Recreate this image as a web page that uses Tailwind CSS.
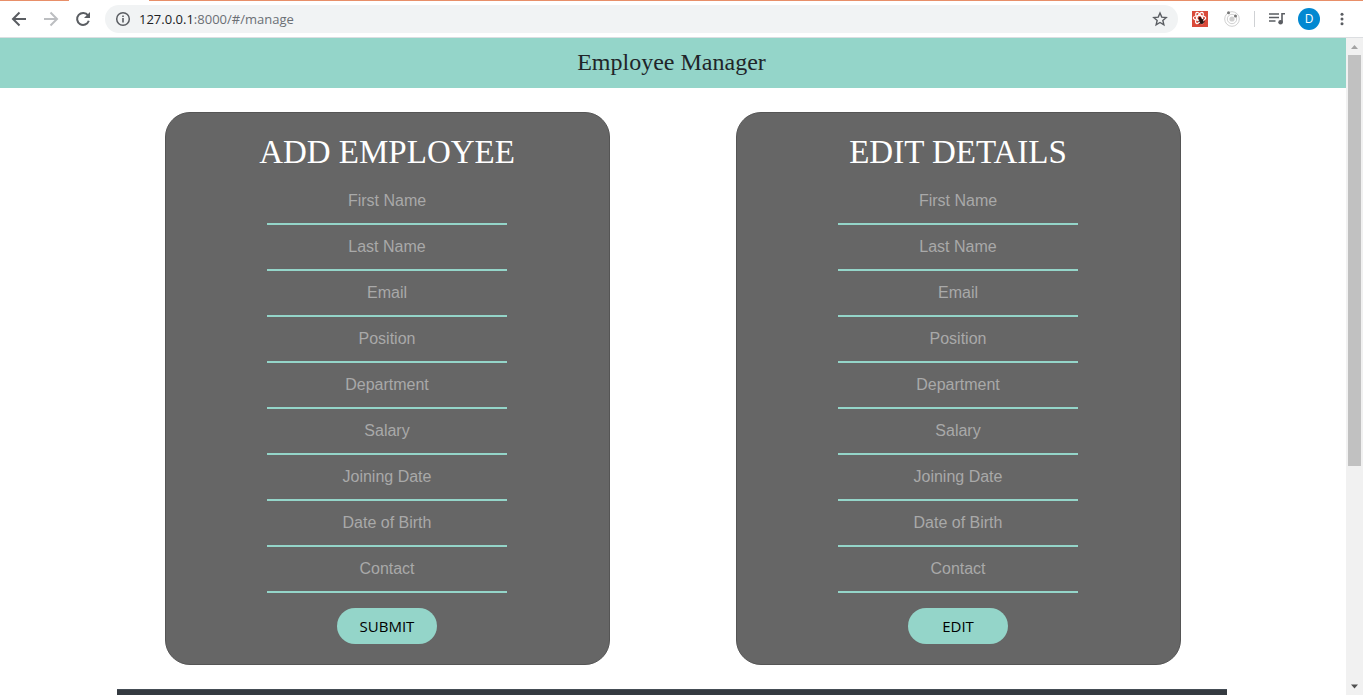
<!DOCTYPE html>
<html lang="en">
<head>
<meta charset="utf-8">
<meta name="viewport" content="width=device-width, initial-scale=1">
<title>Employee Manager</title>
<script src="https://cdn.jsdelivr.net/npm/@tailwindcss/browser@4"></script>
</head>
<body class="flex h-screen flex-col overflow-hidden bg-white font-['Open_Sans',sans-serif]">

<!-- Browser toolbar -->
<div class="flex h-px shrink-0 bg-[#e88f69]"><span class="ml-[69px] h-px w-20 bg-white"></span></div>
<nav aria-label="Browser" class="flex h-[37px] shrink-0 items-center border-b border-[#dcdee1] pl-[11px] pr-[13px] text-[#5f6368]">
  <div class="flex items-center gap-4">
    <button type="button" aria-label="Back" class="size-4"><svg viewBox="0 0 16 16" class="size-4" fill="none" stroke="#5a5d62" stroke-width="2"><path d="M15 8H2.5M8.500 1.500 2 8l6.500 6.500"/></svg></button>
    <button type="button" aria-label="Forward" class="size-4"><svg viewBox="0 0 16 16" class="size-4" fill="none" stroke="#bcbec1" stroke-width="2"><path d="M1 8h12.500M7.500 1.500 14 8l-6.500 6.500"/></svg></button>
    <button type="button" aria-label="Reload" class="size-4"><svg viewBox="0 0 16 16" class="size-4"><path fill="none" stroke="#5a5d62" stroke-width="2" d="M13 4.400A6 6 0 1 0 13.800 9.800"/><path fill="#5a5d62" d="M15 1v6H9z"/></svg></button>
  </div>
  <div class="ml-[14px] flex h-7 flex-1 items-center rounded-full bg-[#f1f3f4] pl-[10px] pr-[10px]">
    <svg viewBox="0 0 16 16" class="size-4 shrink-0"><circle cx="8" cy="8" r="6.300" fill="none" stroke="#5a5d62" stroke-width="1.500"/><path fill="#5a5d62" d="M7.200 7h1.600v4.500H7.200zM7.200 4.400h1.600V6H7.200z"/></svg>
    <a href="#/manage" class="ml-2 flex-1 text-[13px] leading-5 text-[#6b6f74]"><span class="text-[#202124]">127.0.0.1</span>:8000/#/manage</a>
    <button type="button" aria-label="Bookmark" class="size-4"><svg viewBox="0 0 16 16" class="size-4"><path fill="none" stroke="#5a5d62" stroke-width="1.400" d="m8 2 1.750 4.100 4.450.4-3.350 2.950 1 4.350L8 11.500l-3.850 2.300 1-4.350L1.800 6.500l4.450-.4z"/></svg></button>
  </div>
  <button type="button" aria-label="React extension" class="ml-[14px] size-4"><svg viewBox="0 0 16 16" class="size-4"><path fill="#d94a3a" d="M0 0h16v16H0z"/><g fill="none" stroke="#fff" stroke-width="1.200"><ellipse cx="7.500" cy="7" rx="6.200" ry="2.500"/><ellipse cx="7.500" cy="7" rx="6.200" ry="2.500" transform="rotate(60 7.500 7)"/><ellipse cx="7.500" cy="7" rx="6.200" ry="2.500" transform="rotate(120 7.500 7)"/></g><ellipse cx="9.500" cy="10.300" rx="2" ry="2.800" fill="#2b1512" transform="rotate(-25 9.500 10.300)"/><circle cx="8" cy="7.300" r="1.400" fill="#2b1512"/><path stroke="#2b1512" stroke-width=".8" d="m6 10.500 6-2.500M6.800 13l6-2.500"/></svg></button>
  <button type="button" aria-label="Orbit extension" class="ml-4 size-4"><svg viewBox="0 0 16 16" class="size-4"><g fill="none" stroke="#d0d0d0"><circle cx="8" cy="8" r="7.300"/><circle cx="8" cy="8" r="4.700"/></g><circle cx="8" cy="8" r="2.600" fill="#cfcfcf"/><circle cx="4.500" cy="1.800" r="1.500" fill="#777"/><circle cx="11.500" cy="5" r="1.500" fill="#777"/></svg></button>
  <span class="ml-[14px] h-4 w-px bg-[#cfd1d4]"></span>
  <button type="button" aria-label="Media" class="ml-[14px] size-4"><svg viewBox="0 0 16 16" class="size-4"><path fill="none" stroke="#5a5d62" stroke-width="1.600" d="M0 3h10M0 6.500h10M0 10h6.500M13 11V2.800h3"/><circle cx="11.600" cy="11.300" r="2.300" fill="#5a5d62"/></svg></button>
  <button type="button" aria-label="Profile" class="ml-[13px] flex size-[22px] items-center justify-center rounded-full bg-[#0288d1] text-xs leading-4 text-white">D</button>
  <button type="button" aria-label="Menu" class="ml-[14px] size-4"><svg viewBox="0 0 16 16" class="size-4" fill="#5a5d62"><circle cx="8" cy="3.300" r="1.500"/><circle cx="8" cy="8" r="1.500"/><circle cx="8" cy="12.700" r="1.500"/></svg></button>
</nav>

<div class="flex min-h-0 flex-1">
  <div class="min-w-0 flex-1 overflow-hidden">
    <header class="flex h-[50px] items-center justify-center bg-[#94d5c9] pb-0.5 pr-[3px]">
      <h1 class="font-['Liberation_Serif',serif] text-2xl text-[#212529]">Employee Manager</h1>
    </header>
    <main class="mx-auto max-w-[1142px] pt-6">
      <div class="grid grid-cols-2 justify-items-center">
        <form class="flex w-[445px] max-w-full flex-col items-center rounded-[25px] border border-[#555] bg-[#666] pb-5 pr-px pt-[19px]">
          <h2 class="mb-[7px] font-['Liberation_Serif',serif] text-[33px] leading-10 font-medium text-white">ADD EMPLOYEE</h2>
          <div class="flex w-60 flex-col font-['Liberation_Sans',sans-serif] text-base text-white [&>input]:h-[46px] [&>input]:border-b-2 [&>input]:border-[#94d5c9] [&>input]:text-center [&>input]:placeholder:text-[#a9a9a9]">
            <input type="text" aria-label="First Name" placeholder="First Name">
            <input type="text" aria-label="Last Name" placeholder="Last Name">
            <input type="email" aria-label="Email" placeholder="Email">
            <input type="text" aria-label="Position" placeholder="Position">
            <input type="text" aria-label="Department" placeholder="Department">
            <input type="text" aria-label="Salary" placeholder="Salary">
            <input type="text" aria-label="Joining Date" placeholder="Joining Date">
            <input type="text" aria-label="Date of Birth" placeholder="Date of Birth">
            <input type="text" aria-label="Contact" placeholder="Contact">
          </div>
          <button type="submit" class="mt-[15px] h-9 w-[100px] rounded-full bg-[#94d5c9] text-[15px] text-black">SUBMIT</button>
        </form>
        <form class="flex w-[445px] max-w-full flex-col items-center rounded-[25px] border border-[#555] bg-[#666] pb-5 pr-px pt-[19px]">
          <h2 class="mb-[7px] font-['Liberation_Serif',serif] text-[33px] leading-10 font-medium text-white">EDIT DETAILS</h2>
          <div class="flex w-60 flex-col font-['Liberation_Sans',sans-serif] text-base text-white [&>input]:h-[46px] [&>input]:border-b-2 [&>input]:border-[#94d5c9] [&>input]:text-center [&>input]:placeholder:text-[#a9a9a9]">
            <input type="text" aria-label="First Name" placeholder="First Name">
            <input type="text" aria-label="Last Name" placeholder="Last Name">
            <input type="email" aria-label="Email" placeholder="Email">
            <input type="text" aria-label="Position" placeholder="Position">
            <input type="text" aria-label="Department" placeholder="Department">
            <input type="text" aria-label="Salary" placeholder="Salary">
            <input type="text" aria-label="Joining Date" placeholder="Joining Date">
            <input type="text" aria-label="Date of Birth" placeholder="Date of Birth">
            <input type="text" aria-label="Contact" placeholder="Contact">
          </div>
          <button type="submit" class="mt-[15px] h-9 w-[100px] rounded-full bg-[#94d5c9] text-[15px] text-black">EDIT</button>
        </form>
      </div>
      <div class="ml-[15px] mr-[17px] mt-6 h-12 border-t border-[#454d55] bg-[#343a40]"></div>
    </main>
  </div>
  <!-- Scrollbar -->
  <div class="flex w-[17px] shrink-0 flex-col items-center bg-[#f1f1f1]" aria-hidden="true">
    <svg viewBox="0 0 17 17" class="size-[17px] shrink-0" fill="#a3a3a3"><path d="M8.500 7 12 11H5z"/></svg>
    <div class="h-[411px] w-[13px] bg-[#c1c1c1]"></div>
    <svg viewBox="0 0 17 17" class="mt-auto size-[17px] shrink-0" fill="#505050"><path d="M8.500 10.500 12 6.500H5z"/></svg>
  </div>
</div>
</body>
</html>
